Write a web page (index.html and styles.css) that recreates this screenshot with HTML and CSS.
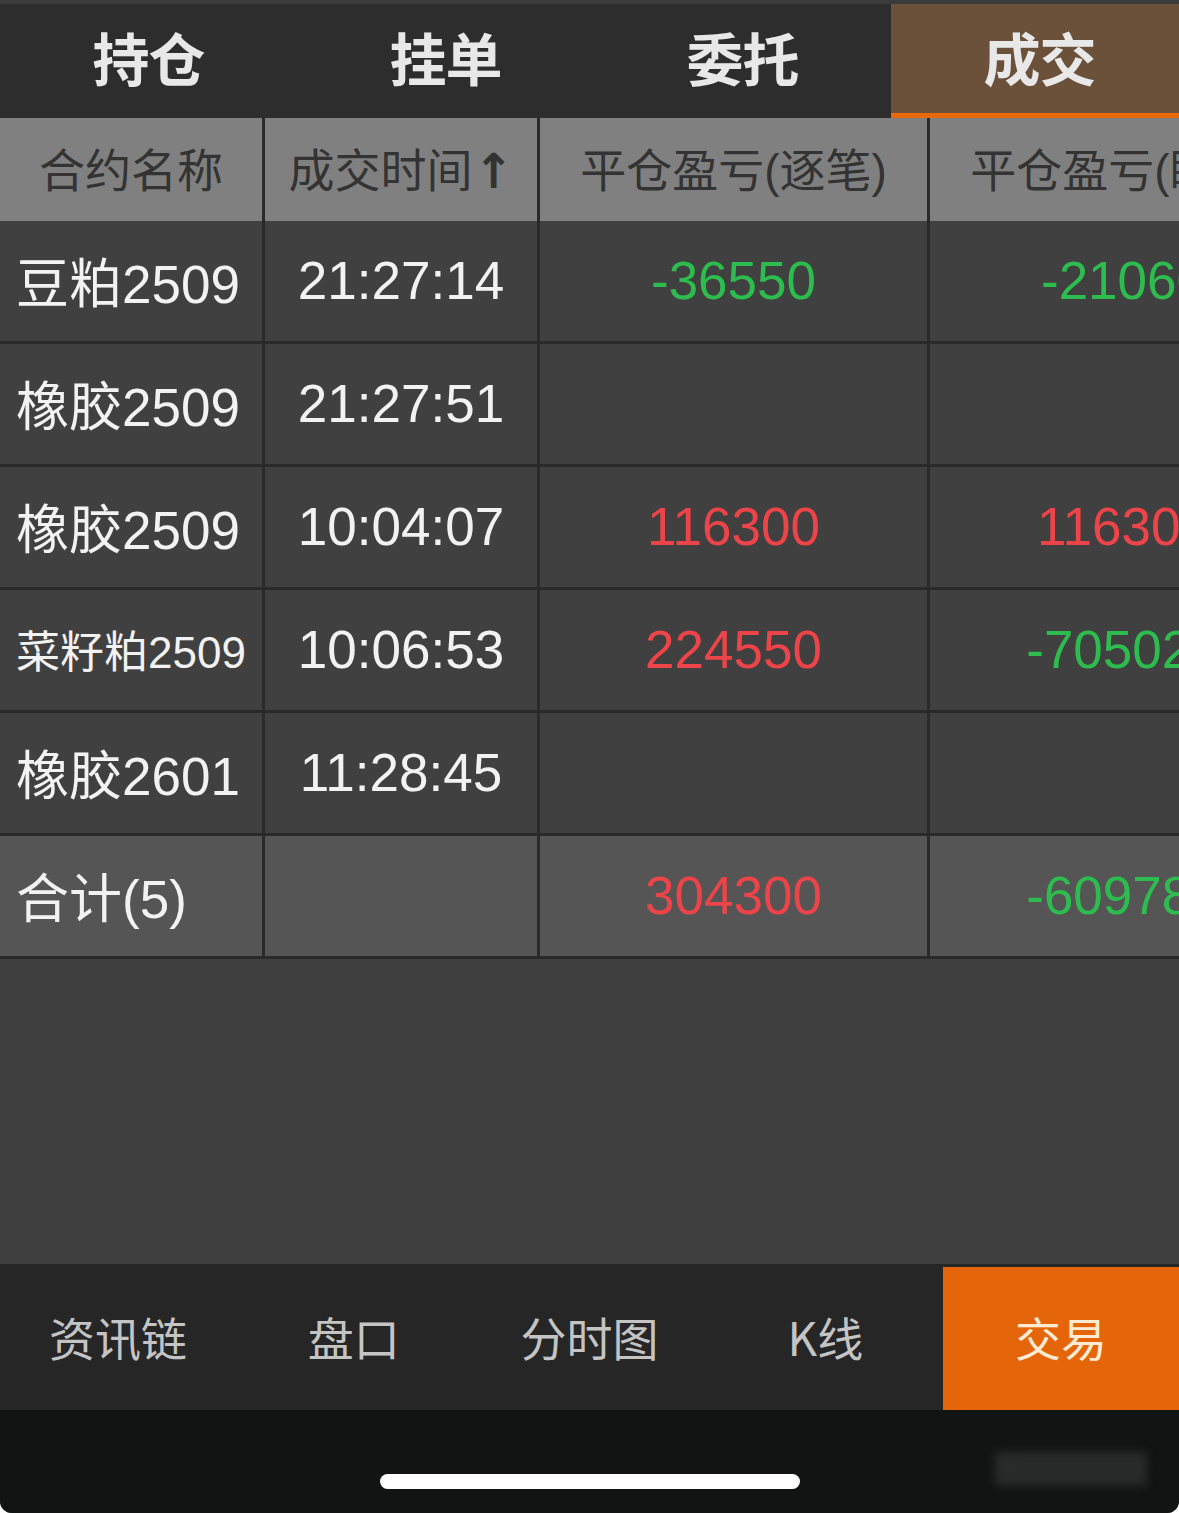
FILE: index.html
```html
<!DOCTYPE html>
<html lang="zh-CN">
<head>
	<meta charset="UTF-8">
	<title>成交</title>
	<link rel="stylesheet" href="styles.css">
</head>
<body>
	<div class="phone">
		<div class="topline"></div>
		<ul class="tabs">
			<li>持仓</li>
			<li>挂单</li>
			<li>委托</li>
			<li class="on">成交</li>
		</ul>
		<div class="grid">
			<div class="row head">
				<div class="cell name">合约名称</div>
				<div class="cell">成交时间<span class="arrow">↑</span></div>
				<div class="cell">平仓盈亏(逐笔)</div>
				<div class="cell">平仓盈亏(盯市)</div>
			</div>
			<div class="row">
				<div class="cell name">豆粕2509</div>
				<div class="cell">21:27:14</div>
				<div class="cell down">-36550</div>
				<div class="cell down">-21060</div>
			</div>
			<div class="row">
				<div class="cell name">橡胶2509</div>
				<div class="cell">21:27:51</div>
				<div class="cell"></div>
				<div class="cell"></div>
			</div>
			<div class="row">
				<div class="cell name">橡胶2509</div>
				<div class="cell">10:04:07</div>
				<div class="cell up">116300</div>
				<div class="cell up">116300</div>
			</div>
			<div class="row">
				<div class="cell name small">菜籽粕2509</div>
				<div class="cell">10:06:53</div>
				<div class="cell up">224550</div>
				<div class="cell down">-705025</div>
			</div>
			<div class="row">
				<div class="cell name">橡胶2601</div>
				<div class="cell">11:28:45</div>
				<div class="cell"></div>
				<div class="cell"></div>
			</div>
			<div class="row total">
				<div class="cell name">合计(5)</div>
				<div class="cell"></div>
				<div class="cell up">304300</div>
				<div class="cell down">-609785</div>
			</div>
		</div>
		<div class="blank"></div>
		<ul class="nav">
			<li>资讯链</li>
			<li>盘口</li>
			<li>分时图</li>
			<li>K线</li>
			<li class="on">交易</li>
		</ul>
		<div class="home">
			<div class="bar"></div>
			<div class="mark"></div>
		</div>
	</div>
</body>
</html>
```

FILE: styles.css
```css
*{
	margin: 0;
	padding: 0;
	box-sizing: border-box;
}
body{
	background-color: #fff;
	font-family: "Liberation Sans", "Noto Sans CJK SC", sans-serif;
}
.phone{
	width: 1179px;
	height: 1513px;
	background-color: #404040;
	border-radius: 0 0 12px 12px;
	overflow: hidden;
	display: flex;
	flex-direction: column;
}
.topline{
	height: 4px;
	background-color: #3b3b3b;
}
.tabs{
	list-style: none;
	display: grid;
	grid-template-columns: repeat(4, 297px);
	height: 114px;
	background-color: #2d2d2d;
	overflow: hidden;
}
.tabs li{
	display: flex;
	align-items: center;
	justify-content: center;
	padding-bottom: 10px;
	font-family: "Noto Sans CJK SC", sans-serif;
	font-size: 57px;
	font-weight: bold;
	color: #e8e8e8;
	letter-spacing: -1px;
}
.tabs li.on{
	background-color: #6b503a;
	border-bottom: 5px solid #e8680a;
	padding-bottom: 5px;
}
.grid{
	overflow: hidden;
	width: 1179px;
}
.row{
	display: grid;
	grid-template-columns: 265px 275px 390px 390px;
	height: 123px;
	border-bottom: 3px solid #2a2a2a;
	color: #f2f2f2;
	font-size: 53px;
	white-space: nowrap;
}
.row.head{
	height: 103px;
	border-bottom: 0;
	background-color: #808080;
	color: #333;
	font-size: 46px;
}
.row.head .cell{
	padding-bottom: 5px;
}
.arrow{
	font-family: "DejaVu Sans", sans-serif;
	font-weight: bold;
	font-size: 48px;
	padding-top: 8px;
	margin-left: 1px;
}
.row.total{
	background-color: #555;
}
.cell{
	display: flex;
	align-items: center;
	justify-content: center;
	border-right: 3px solid #2a2a2a;
	overflow: hidden;
	padding-bottom: 2px;
}
.cell.name{
	justify-content: flex-start;
	padding-left: 16px;
}
.row.head .cell.name{
	justify-content: center;
	padding-left: 0;
}
.cell.small{
	font-size: 44px;
}
.up{
	color: #ec4448;
}
.down{
	color: #2dbd4e;
}
.blank{
	flex: 1;
}
.nav{
	list-style: none;
	display: grid;
	grid-template-columns: repeat(5, 1fr);
	height: 146px;
	padding-top: 3px;
	background-color: #262626;
}
.nav li{
	display: flex;
	align-items: center;
	justify-content: center;
	padding-bottom: 6px;
	font-family: "Noto Sans CJK SC", sans-serif;
	font-size: 46px;
	color: #c4c4c4;
}
.nav li.on{
	background-color: #e5650a;
	color: #fdebd3;
}
.home{
	height: 103px;
	background-color: #111413;
	display: flex;
	justify-content: center;
	padding-top: 64px;
	position: relative;
}
.bar{
	width: 420px;
	height: 15px;
	border-radius: 8px;
	background-color: #fff;
}
.mark{
	position: absolute;
	left: 995px;
	top: 42px;
	width: 152px;
	height: 34px;
	background-color: #3a3a3a;
	filter: blur(5px);
	opacity: 0.6;
}
```
